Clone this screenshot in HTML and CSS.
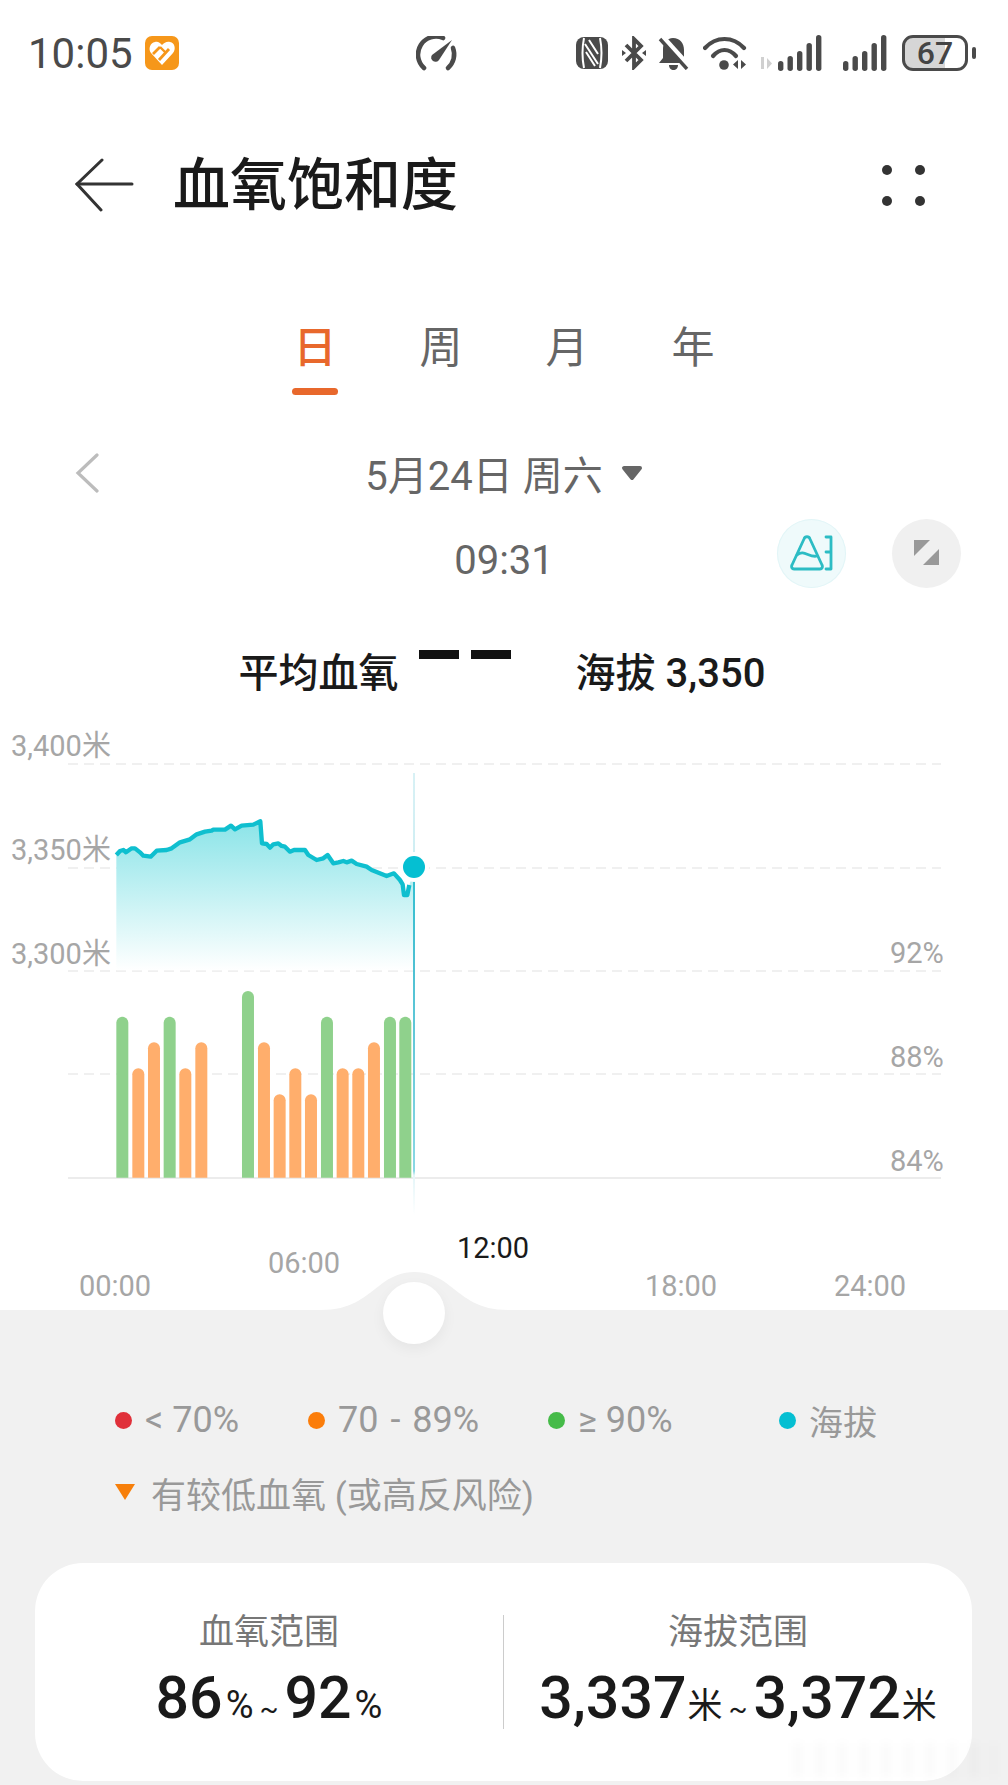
FILE: index.html
```html
<!DOCTYPE html>
<html lang="zh-CN">
<head>
  <meta charset="UTF-8" />
  <meta name="viewport" content="width=device-width, initial-scale=1.0"/>
  <title>血氧饱和度</title>
  <link rel="stylesheet" href="styles.css">
</head>
<body>

  <div class="status-bar">
    <span class="clock">10:05</span>
    <svg class="app-icon" width="34" height="34" viewBox="0 0 34 34">
      <rect width="34" height="34" rx="7" fill="#f6971a"/>
      <path d="M17 29L6 17C3 13 5 7 10 6C13 5 15 7 17 9C19 7 22 5 25 6C30 7 31 13 28 17Z" fill="#fff"/>
      <path d="M8 18L15 11M14 24L24 13" stroke="#f6971a" stroke-width="2.8" fill="none"/>
      <path d="M15 11L21 17" stroke="#f6971a" stroke-width="2.4" fill="none"/>
    </svg>
    <svg class="speed-icon" width="42" height="36" viewBox="0 0 42 36">
      <g fill="none" stroke="#4a4a4a" stroke-width="4.6" stroke-linecap="round">
        <path d="M8 32A18 18 0 0 1 27 2"/>
        <path d="M37 12A18 18 0 0 1 32 32"/>
      </g>
      <path d="M36 4L23 24A4 4 0 0 1 16 19Z" fill="#4a4a4a"/>
    </svg>
    <div class="status-icons">
      <svg width="32" height="32" viewBox="0 0 32 32">
        <rect width="32" height="32" rx="8" fill="#4a4a4a"/>
        <path d="M8 1C6 11 6 21 8 31M24 1C26 11 26 21 24 31M9 7L22 27M10 15L19 29M22 17L13 3" fill="none" stroke="#fff" stroke-width="2"/>
      </svg>
      <svg class="bt-icon" width="24" height="34" viewBox="0 0 24 34" fill="none" stroke="#4a4a4a" stroke-width="3.8">
        <path d="M4 9L19 24L12 31V3L19 10L4 25"/>
        <path d="M0 14l4 3-4 3zM24 14l-4 3 4 3z" fill="#4a4a4a" stroke="none"/>
      </svg>
      <svg class="bell-icon" width="31" height="34" viewBox="0 0 31 34">
        <path d="M15 2C22 2 26 7 26 14V22L30 27H1L5 22V13C5 7 9 2 15 2Z" fill="#4a4a4a"/>
        <path d="M11 29h9c0 3-2 5-4.5 5s-4.5-2-4.5-5z" fill="#4a4a4a"/>
        <path d="M3 -1L31 30" stroke="#fff" stroke-width="5"/>
        <path d="M2 3L29 33" stroke="#4a4a4a" stroke-width="3.4"/>
      </svg>
      <svg class="wifi-icon" width="45" height="34" viewBox="0 0 45 34">
        <g fill="none" stroke="#4a4a4a" stroke-width="4.2" stroke-linecap="round">
          <path d="M2 12C13 0 30 0 41 12"/>
          <path d="M10 20C17 12 26 12 33 20"/>
        </g>
        <circle cx="21" cy="29" r="4.8" fill="#4a4a4a"/>
        <path d="M35 24v9l-5-4.5zM38 24v9l5-4.5z" fill="#4a4a4a"/>
      </svg>
      <div class="signal">
        <svg class="sim-mark" width="15" height="14" viewBox="0 0 15 14" fill="#d0d0d0">
          <rect x="1" y="1" width="3" height="12"/>
          <path d="M7 2v11l5-5.5z"/>
        </svg>
        <svg width="44" height="36" viewBox="0 0 44 36" fill="#4a4a4a">
          <rect x="0" y="26" width="5.4" height="10" rx="2.7"/>
          <rect x="9.5" y="21" width="5.4" height="15" rx="2.7"/>
          <rect x="19" y="16" width="5.4" height="20" rx="2.7"/>
          <rect x="28.5" y="8" width="5.4" height="28" rx="2.7"/>
          <rect x="38" y="0" width="5.4" height="36" rx="2.7"/>
        </svg>
      </div>
      <svg class="signal-two" width="44" height="36" viewBox="0 0 44 36" fill="#4a4a4a">
        <rect x="0" y="26" width="5.4" height="10" rx="2.7"/>
        <rect x="9.5" y="21" width="5.4" height="15" rx="2.7"/>
        <rect x="19" y="16" width="5.4" height="20" rx="2.7"/>
        <rect x="28.5" y="8" width="5.4" height="28" rx="2.7"/>
        <rect x="38" y="0" width="5.4" height="36" rx="2.7"/>
      </svg>
      <div class="battery"><span>67</span></div>
      <span class="battery-nub"></span>
    </div>
  </div>

  <header class="title-bar">
    <svg class="back" width="60" height="54" viewBox="0 0 60 54" fill="none" stroke="#333" stroke-width="3" stroke-linecap="round">
      <path d="M58 26H3"/>
      <path d="M28 2L3 26L27 52"/>
    </svg>
    <h1>血氧饱和度</h1>
    <div class="more-dots"><i></i><i></i><i></i><i></i></div>
  </header>

  <nav class="tabs">
    <a class="tab active">日</a>
    <a class="tab">周</a>
    <a class="tab">月</a>
    <a class="tab">年</a>
  </nav>

  <div class="date-row">
    <svg class="prev" width="24" height="40" viewBox="0 0 24 40" fill="none" stroke="#bcbcbc" stroke-width="3.2" stroke-linecap="round">
      <path d="M22 2L3 20L22 38"/>
    </svg>
    <div class="date">5月24日 周六
      <svg width="22" height="16" viewBox="0 0 22 16"><path d="M3 3H19L11 13Z" fill="#666" stroke="#666" stroke-width="4" stroke-linejoin="round"/></svg>
    </div>
  </div>

  <div class="time-row">
    <span class="time">09:31</span>
    <div class="round-btns">
      <button class="round-btn ai">
        <svg width="44" height="38" viewBox="0 0 44 38" fill="none" stroke="#2cbcc4" stroke-width="2.8" stroke-linecap="round" stroke-linejoin="round">
          <path d="M4 35H30C32 35 33 33 32 31L20 5C19 2 15 2 14 5L2 31C1 33 2 35 4 35Z"/>
          <path d="M7 21C14 15 19 24 27 22"/>
          <path d="M36 3H41V35H36M41 18H36"/>
        </svg>
      </button>
      <button class="round-btn">
        <svg width="26" height="26" viewBox="0 0 26 26" fill="#999">
          <path d="M0 0H16L0 16Z"/>
          <path d="M25 9V25H9Z"/>
        </svg>
      </button>
    </div>
  </div>

  <div class="reading">
    <span>平均血氧</span>
    <div class="no-data"><i></i><i></i></div>
    <span class="altitude">海拔 3,350</span>
  </div>

  <svg class="chart" width="1008" height="606" viewBox="0 704 1008 606">
    <defs>
      <linearGradient id="areaFill" x1="0" y1="0" x2="0" y2="1">
        <stop offset="0" stop-color="#8be4e8"/>
        <stop offset="1" stop-color="#ffffff"/>
      </linearGradient>
      <linearGradient id="cursorLine" x1="0" y1="0" x2="0" y2="1">
        <stop offset="0" stop-color="#d8f1f5"/>
        <stop offset="0.18" stop-color="#cfeef3"/>
        <stop offset="0.2" stop-color="#2fbfd0"/>
        <stop offset="0.45" stop-color="#4fc1d3"/>
        <stop offset="0.9" stop-color="#8ad8e4"/>
        <stop offset="0.91" stop-color="#e4f5f8"/>
        <stop offset="1" stop-color="#ffffff"/>
      </linearGradient>
    </defs>

    <g class="grid-lines">
      <path d="M68 764H941M68 868H941M68 971H941M68 1074H941"/>
    </g>
    <path class="axis" d="M68 1178H941"/>

    <text class="axis-label" x="11" y="756">3,400米</text>
    <text class="axis-label" x="11" y="860">3,350米</text>
    <text class="axis-label" x="11" y="964">3,300米</text>
    <text class="axis-label" x="890" y="963">92%</text>
    <text class="axis-label" x="890" y="1067">88%</text>
    <text class="axis-label" x="890" y="1171">84%</text>

    <!-- zoom-traced points, scaled down to page px by the group transform -->
    <g transform="translate(90 790) scale(0.3333)">
      <path fill="url(#areaFill)" d="M79 195L90 183L100 180L108 187L125 175L135 175L150 187L160 197L182 200L200 182L230 180L245 175L270 157L300 148L320 133L345 125L365 122L370 119L405 119L423 107L435 118L455 107L490 104L511 94L516 160L530 162L540 173L550 163L565 160L575 168L585 170L600 185L612 180L645 180L655 195L680 210L700 205L713 195L730 220L745 217L760 213L770 217L785 212L800 222L830 230L845 240L890 258L912 250L930 270L938 283L942 315L952 315L958 285L973 240V541H79Z"/>
      <path fill="none" stroke="#0fbfcf" stroke-width="13" stroke-linejoin="round" d="M79 195L90 183L100 180L108 187L125 175L135 175L150 187L160 197L182 200L200 182L230 180L245 175L270 157L300 148L320 133L345 125L365 122L370 119L405 119L423 107L435 118L455 107L490 104L511 94L516 160L530 162L540 173L550 163L565 160L575 168L585 170L600 185L612 180L645 180L655 195L680 210L700 205L713 195L730 220L745 217L760 213L770 217L785 212L800 222L830 230L845 240L890 258L912 250L930 270L938 283L942 315L952 315L958 285"/>

      <g fill="#8fd18c">
        <path d="M79 1163V698a18 18 0 0 1 36 0V1163Z"/>
        <path d="M221 1163V698a18 18 0 0 1 36 0V1163Z"/>
        <path d="M456 1163V621a18 18 0 0 1 36 0V1163Z"/>
        <path d="M693 1163V698a18 18 0 0 1 36 0V1163Z"/>
        <path d="M882 1163V698a18 18 0 0 1 36 0V1163Z"/>
        <path d="M928 1163V698a18 18 0 0 1 36 0V1163Z"/>
      </g>
      <g fill="#ffae6c">
        <path d="M127 1163V853a18 18 0 0 1 36 0V1163Z"/>
        <path d="M174 1163V775a18 18 0 0 1 36 0V1163Z"/>
        <path d="M268 1163V853a18 18 0 0 1 36 0V1163Z"/>
        <path d="M316 1163V775a18 18 0 0 1 36 0V1163Z"/>
        <path d="M504 1163V775a18 18 0 0 1 36 0V1163Z"/>
        <path d="M551 1163V931a18 18 0 0 1 36 0V1163Z"/>
        <path d="M598 1163V853a18 18 0 0 1 36 0V1163Z"/>
        <path d="M645 1163V931a18 18 0 0 1 36 0V1163Z"/>
        <path d="M740 1163V853a18 18 0 0 1 36 0V1163Z"/>
        <path d="M787 1163V853a18 18 0 0 1 36 0V1163Z"/>
        <path d="M834 1163V775a18 18 0 0 1 36 0V1163Z"/>
      </g>
    </g>

    <rect x="413" y="773" width="2" height="442" fill="url(#cursorLine)"/>
    <circle cx="414" cy="867" r="15" fill="#fff"/>
    <circle cx="414" cy="867" r="11" fill="#05bfd2"/>

    <text class="axis-label tick" x="115" y="1296">00:00</text>
    <text class="axis-label tick" x="304" y="1273">06:00</text>
    <text class="axis-label tick now" x="493" y="1258">12:00</text>
    <text class="axis-label tick" x="681" y="1296">18:00</text>
    <text class="axis-label tick" x="870" y="1296">24:00</text>
  </svg>

  <section class="panel">
    <svg class="bump" width="187" height="38" viewBox="0 0 187 38">
      <path d="M0 38C30 38 42 26 58 14C70 4 82 0 93.5 0C105 0 117 4 129 14C145 26 157 38 187 38Z" fill="#f1f1f1"/>
    </svg>
    <span class="knob"></span>

    <div class="legend">
      <div class="legend-item"><i class="dot red"></i>&lt; 70%</div>
      <div class="legend-item spaced"><i class="dot orange"></i>70 - 89%</div>
      <div class="legend-item"><i class="dot green"></i>≥ 90%</div>
      <div class="legend-item cjk"><i class="dot teal"></i>海拔</div>
      <div class="legend-item cjk wide">
        <svg width="20" height="16" viewBox="0 0 20 16"><path d="M0 0H20L10 16Z" fill="#f77f0a"/></svg>
        有较低血氧 (或高反风险)
      </div>
    </div>

    <div class="range-card">
      <div class="range">
        <h2>血氧范围</h2>
        <p class="range-value">86<small>%</small><em>~</em>92<small>%</small></p>
      </div>
      <div class="range">
        <h2>海拔范围</h2>
        <p class="range-value">3,337<small class="unit">米</small><em>~</em>3,372<small class="unit">米</small></p>
      </div>
      <div class="watermark"></div>
    </div>
  </section>

</body>
</html>
```

FILE: styles.css
```css
:root {
  --ink: #1a1a1a;
  --icon: #4a4a4a;
  --muted: #666;
  --faint: #a6a6a6;
  --panel: #f1f1f1;
  --accent: #e8682c;
  --sans: Roboto, "Noto Sans CJK SC", sans-serif;
}
* { box-sizing: border-box; }
body {
  margin: 0;
  width: 1008px;
  height: 1785px;
  overflow: hidden;
  background: #fff;
  color: var(--ink);
  font-family: var(--sans);
}

/* status bar */
.status-bar {
  display: flex;
  align-items: center;
  height: 106px;
  padding-left: 28px;
}
.clock {
  width: 117px;
  font-size: 42px;
  color: var(--icon);
}
.speed-icon {
  margin-left: 237px;
  margin-top: 2px;
}
.status-icons {
  display: flex;
  align-items: center;
  margin-left: 118px;
}
.bt-icon { margin-left: 14px; }
.bell-icon { margin-left: 12px; }
.wifi-icon { margin-left: 14px; }
.signal {
  display: flex;
  align-items: flex-end;
  margin-left: 12px;
}
.sim-mark { margin-right: 3px; margin-bottom: 1px; }
.signal-two { margin-left: 21px; }
.battery {
  display: flex;
  align-items: center;
  justify-content: center;
  width: 66px;
  height: 36px;
  margin-left: 15px;
  border: 3px solid var(--icon);
  border-radius: 11px;
  background: linear-gradient(90deg, #d6d6d6 67%, #fff 67%);
  font-size: 32px;
  font-weight: 500;
  color: #444;
}
.battery-nub {
  width: 4px;
  height: 12px;
  margin-left: 4px;
  border-radius: 2px;
  background: var(--icon);
}

/* title */
.title-bar {
  display: flex;
  align-items: center;
  height: 158px;
  padding-left: 74px;
}
.title-bar h1 {
  margin: 0 0 0 39px;
  font-size: 57px;
  font-weight: 500;
  line-height: 1;
}
.more-dots {
  display: grid;
  grid-template-columns: 10px 10px;
  gap: 21px 23px;
  margin-left: auto;
  margin-right: 83px;
}
.more-dots i {
  width: 10px;
  height: 10px;
  border-radius: 50%;
  background: #333;
}

/* day / week / month / year */
.tabs {
  display: flex;
  justify-content: center;
  height: 136px;
}
.tab {
  position: relative;
  width: 126px;
  padding-top: 59px;
  text-align: center;
  font-size: 43px;
  line-height: 50px;
  color: var(--muted);
}
.tab.active { color: var(--accent); font-weight: 500; }
.tab.active::after {
  content: "";
  position: absolute;
  left: 40px;
  bottom: 5px;
  width: 46px;
  height: 7px;
  border-radius: 4px;
  background: var(--accent);
}

.date-row {
  display: grid;
  grid-template-columns: 1fr auto 1fr;
  align-items: center;
  height: 74px;
  margin-top: 36px;
}
.prev { margin-left: 75px; }
.date {
  display: flex;
  align-items: center;
  gap: 18px;
  font-size: 40px;
  color: var(--muted);
  white-space: nowrap;
}

.time-row {
  display: grid;
  grid-template-columns: 1fr auto 1fr;
  grid-template-areas: ". time btns";
  align-items: center;
  height: 70px;
  margin-top: 8px;
}
.time {
  grid-area: time;
  margin-top: 14px;
  font-size: 40px;
  color: var(--muted);
}
.round-btns {
  grid-area: btns;
  display: flex;
  justify-content: flex-end;
  gap: 46px;
  padding-right: 47px;
}
.round-btn {
  display: flex;
  align-items: center;
  justify-content: center;
  width: 69px;
  height: 69px;
  padding: 0;
  border: none;
  border-radius: 50%;
  background: #f0f0f0;
}
.round-btn.ai {
  background: #effafb;
  box-shadow: inset 0 0 0 1px #e2f5f7;
}

.reading {
  display: flex;
  justify-content: center;
  height: 64px;
  margin-top: 52px;
  padding-right: 4px;
  font-size: 40px;
  font-weight: 500;
  line-height: 68px;
}
.no-data {
  display: flex;
  gap: 12px;
  margin: 10px 65px 0 20px;
}
.no-data i {
  width: 40px;
  height: 9px;
  background: #111;
}

/* chart */
.chart { display: block; }
.grid-lines path {
  fill: none;
  stroke: #ececec;
  stroke-width: 1.5;
  stroke-dasharray: 10 6;
}
.axis {
  fill: none;
  stroke: #e6e6e6;
  stroke-width: 1.5;
}
.axis-label {
  font-family: var(--sans);
  font-size: 29px;
  fill: var(--faint);
}
.tick {
  text-anchor: middle;
  font-size: 29px;
}
.tick.now { fill: var(--ink); }

/* bottom panel */
.panel {
  position: relative;
  height: 475px;
  padding-top: 74px;
  background: var(--panel);
}
.bump {
  position: absolute;
  left: 321px;
  top: -38px;
}
.knob {
  position: absolute;
  left: 383px;
  top: -28px;
  width: 62px;
  height: 62px;
  border-radius: 50%;
  background: #fff;
  box-shadow: 0 5px 14px rgba(0,0,0,0.05);
}
.legend {
  display: grid;
  grid-template-columns: 193px 240px 231px auto;
  grid-auto-rows: 72px;
  padding-left: 115px;
  font-size: 36px;
  color: #999;
}
.legend-item {
  display: flex;
  align-items: center;
  gap: 13px;
  white-space: nowrap;
}
.legend-item.spaced { word-spacing: 3px; }
.legend-item.cjk { font-size: 34px; }
.legend-item.wide {
  grid-column: 1 / -1;
  gap: 16px;
  font-size: 35px;
}
.dot {
  width: 17px;
  height: 17px;
  border-radius: 50%;
}
.red { background: #e0303a; }
.orange { background: #fb7d0a; }
.green { background: #45bb48; }
.teal { background: #05bfd2; }

.range-card {
  position: relative;
  display: flex;
  height: 218px;
  margin: 35px 36px 0 35px;
  padding-top: 52px;
  border-radius: 48px;
  background: #fff;
}
.range {
  flex: 1;
  height: 114px;
  text-align: center;
}
.range + .range { border-left: 1px solid #ccc; }
.range h2 {
  margin: 0;
  font-size: 35px;
  font-weight: 400;
  line-height: 36px;
  color: #777;
}
.range-value {
  margin: 15px 0 0;
  font-size: 59px;
  font-weight: 500;
  line-height: 64px;
  white-space: nowrap;
}
.range-value small {
  margin-left: 3px;
  font-size: 38px;
  font-weight: 400;
}
.range-value small.unit {
  margin-left: 1px;
  font-size: 35px;
}
.range-value em {
  margin: 0 6px;
  font-size: 28px;
  font-style: normal;
  font-weight: 400;
}
.watermark {
  position: absolute;
  right: -24px;
  bottom: 4px;
  width: 203px;
  height: 34px;
  background: repeating-linear-gradient(90deg, rgba(0,0,0,0.02) 0 10px, rgba(0,0,0,0) 10px 22px);
  filter: blur(4px);
}
```
